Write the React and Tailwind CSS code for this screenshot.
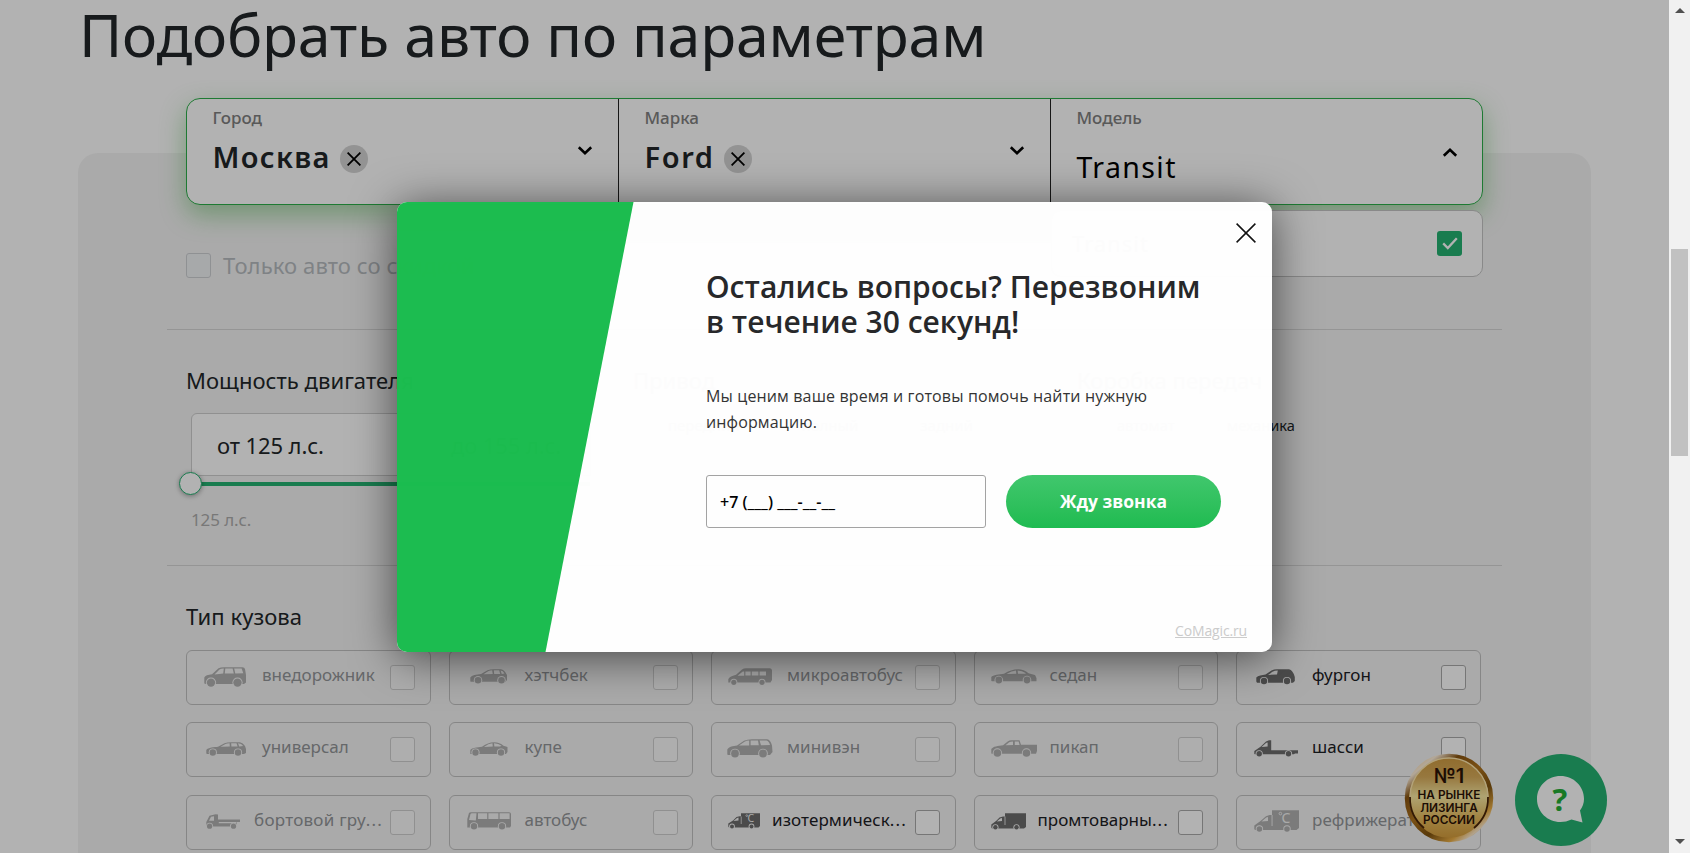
import { clsx } from "clsx";

const WINDOW = "fill-[#f4f4f4]";

function Wheels({ a, b, y, r }) {
  return (
    <>
      <circle cx={a} cy={y} r={r + 0.9} className={WINDOW} />
      <circle cx={b} cy={y} r={r + 0.9} className={WINDOW} />
      <circle cx={a} cy={y} r={r} />
      <circle cx={b} cy={y} r={r} />
    </>
  );
}

const icons = {
  suv: {
    w: 42, h: 20,
    body: (
      <>
        <path d="M.3 16.5V10.5C1 8.5 4 7.6 8 7.2L14.5 1.2Q16.5.2 20 .2H38.5Q40.5.3 41 2L42 8V15.5L40 17H2Z" />
        <path className={WINDOW} d="M10.5 7.4L15.5 2.5Q17 1.5 19.8 1.4L19.2 6.6ZM21.3 1.4H28.6L29.8 6.5H20.8ZM30.2 1.4H37.6L39.3 6.2 31.3 6.5Z" />
        <Wheels a={7} b={33.5} y={15.6} r={4.2} />
      </>
    ),
  },
  hatch: {
    w: 38, h: 15,
    body: (
      <>
        <path d="M.3 12.5V8.5C2 6.2 6 5.6 11 5L17.5 1.2Q20 .3 24 .3H31Q34 .6 37 6V11L35.5 12.8H1Z" />
        <path className={WINDOW} d="M13.5 5.2L18.5 2Q20 1.3 22.2 1.3L22.7 5ZM23.8 1.3H29.2L30.2 4.9H24.2ZM30.6 1.5Q33 1.7 34.5 4.6L31.8 4.9Z" />
        <Wheels a={8} b={31.5} y={11.2} r={3.3} />
      </>
    ),
  },
  wagon: {
    w: 40, h: 14,
    body: (
      <>
        <path d="M.3 11.5V8C2 5.5 8 5.2 12 4.8L18.5 1.2Q21 .3 25 .3H34Q37 .8 39 4L40 7V11L38 12H1Z" />
        <path className={WINDOW} d="M14.5 4.7L19.5 2Q21 1.3 23.6 1.2L23.8 4.5ZM25.2 1.2H30.5L31.6 4.4H25.4ZM32 1.3Q35.5 1.4 37.2 4.1L33.2 4.4Z" />
        <Wheels a={6.8} b={32} y={10.5} r={3.2} />
      </>
    ),
  },
  coupe: {
    w: 38, h: 14,
    body: (
      <>
        <path d="M.3 12V8C2 5.8 7 5.4 12 4.8Q18 .3 24 .3 30 .5 33.5 3.8L37.5 5V10L36 12H1Z" />
        <path className={WINDOW} d="M14 5Q18.5 1.5 22.4 1.3L22.8 4.6ZM24 1.3Q28.5 1.3 31.5 3.8L30 4.4 24.4 4.6Z" />
        <Wheels a={5.5} b={31} y={10.5} r={3.2} />
      </>
    ),
  },
  flatbed: {
    w: 34, h: 15,
    body: (
      <>
        <path d="M.3 12.5V8L3.5 1.8 9.5.2 12 .5V5.5H34V8H31L30 12.5H1Z" />
        <path className={WINDOW} d="M3 6.8L5 2.8 8 2.2V6.8ZM12.8 8H30.5V9.2H12.8Z" />
        <Wheels a={3.6} b={27.5} y={12.2} r={2.6} />
      </>
    ),
  },
  bus: {
    w: 44, h: 18,
    body: (
      <>
        <path d="M.3 15.5V7L2 .9Q2.5.2 4 .2H42Q44 .4 44 2V14L43 15.5Z" />
        <path className={WINDOW} d="M2 8L3.5 2Q3.8 1.3 5 1.3H9.5L8.8 8.4ZM11 1.3H20.2V7H11ZM21.4 1.3H31.4V7H21.4ZM32.6 1.3H42.6V7H32.6Z" />
        <Wheels a={7} b={35} y={14.3} r={3.2} />
      </>
    ),
  },
  minibus: {
    w: 44, h: 18,
    body: (
      <>
        <path d="M.3 14.5V11C2 8.2 5 7.8 8 6.8L14 1.5Q15.5.2 18 .2H42Q44 .4 44 2.5V12L42.5 14.5Z" />
        <path className={WINDOW} d="M9.5 7.8L14.8 3.4H16.2V7.8ZM17.4 3.6H22.6V7.4H17.4ZM23.8 3.6H30.4V7.4H23.8ZM31.6 3.6H38V7.4H31.6Z" />
        <Wheels a={5.8} b={34} y={14.3} r={2.6} />
      </>
    ),
  },
  sedan: {
    w: 46, h: 15,
    body: (
      <>
        <path d="M.3 12V8C2 5.8 8 5.6 13 4.8Q20 .3 27 .3 33 .5 37.5 4.3L44 6 45.5 9V12.2H1Z" />
        <path className={WINDOW} d="M15.5 5Q20.5 1.6 25 1.4L25.3 4.8ZM26.6 1.4Q31 1.4 35 4.2L34 4.7 27 4.8Z" />
        <Wheels a={7.8} b={36} y={11} r={3.4} />
      </>
    ),
  },
  minivan: {
    w: 46, h: 19,
    body: (
      <>
        <path d="M.3 15.5V10.5C2 7.5 6 7 10 6.5L17 1.8Q20 .3 25 .3H40Q43.5.8 45 6.5L45.5 13 43 16H1Z" />
        <path className={WINDOW} d="M12 6.6L17.5 2.8Q19.5 1.6 22.2 1.5V6.4ZM23.6 1.5H31L31.8 6.2H23.6ZM32.6 1.5H39.5Q42 2.2 43 6L34 6.2Z" />
        <Wheels a={8} b={36} y={14.5} r={3.9} />
      </>
    ),
  },
  pickup: {
    w: 46, h: 18,
    body: (
      <>
        <path d="M.3 13.5V9C2 6.4 7 5.8 12 5.2L17 1.2Q18.5.3 20 .3H28.5L30 4.8H46V11L45 13.8H1Z" />
        <path className={WINDOW} d="M14.5 5.2L18.2 2.2Q19.5 1.4 22 1.4V5ZM23.8 1.4H27.6L28.6 5H23.8Z" />
        <Wheels a={6.4} b={35.5} y={13} r={3.8} />
      </>
    ),
  },
  van: {
    w: 39, h: 16,
    body: (
      <>
        <path d="M.3 12.5V8.5C2 6.6 6 6.2 9.5 5.6L15.5 1.5Q18 .3 21 .3H33Q37 1.2 38.8 8V12L37 13.8H1Z" />
        <path className={WINDOW} d="M12 5.9L16.5 2.8Q18.5 1.7 21.8 1.6L21 5.6Z" />
        <Wheels a={8} b={31} y={12} r={3.2} />
      </>
    ),
  },
  chassis: {
    w: 44, h: 17,
    body: (
      <>
        <path d="M.3 14V11L6.5 6.8 12 1.5 15 .3H17.2V10.2H44V13.5H41L40 14.2H1Z" />
        <path className={WINDOW} d="M7.5 7L12.3 2.8 13.6 2.4V6.4Z" />
        <Wheels a={5.2} b={34.5} y={13.8} r={2.7} />
      </>
    ),
  },
  reefer: {
    w: 45, h: 23,
    body: (
      <>
        <path d="M.3 19V15.5L6.5 11 12 6.2 15.5 5H18V.2H45V18L42.5 20H1Z" />
        <path className={WINDOW} d="M7.5 11.4L12.3 7.6 14 7V11ZM17.6 5H18.5V16H17.6Z" />
        <circle cx="26.4" cy="3.6" r="1.3" fill="none" strokeWidth="0.9" className="stroke-[#f4f4f4]" />
        <text x="27.6" y="13.4" className="fill-[#f4f4f4] font-['Noto_Sans'] text-[14px]">C</text>
        <Wheels a={5.4} b={33} y={19} r={2.8} />
      </>
    ),
  },
  isotherm: {
    w: 32, h: 16,
    body: (
      <>
        <path d="M.3 13.5V10.5L5 7.5 8.5 4 11.5 3.2H13V.2H32V13L30.5 14.5H1Z" />
        <path className={WINDOW} d="M5.5 8L9 5 10.5 4.6V7.6ZM12.8 3.4H13.5V11H12.8Z" />
        <circle cx="18.8" cy="2.6" r="0.9" fill="none" strokeWidth="0.7" className="stroke-[#f4f4f4]" />
        <text x="19.6" y="9.3" className="fill-[#f4f4f4] font-['Noto_Sans'] text-[10.5px]">C</text>
        <Wheels a={4} b={23.5} y={13.4} r={2} />
      </>
    ),
  },
  boxTruck: {
    w: 35, h: 17,
    body: (
      <>
        <path d="M.3 14.5V11.5L5 8 8.5 4.5 12 3.4H14V.2H35V14L33 15.5H1Z" />
        <path className={WINDOW} d="M5.8 8.4L9.2 5.4 11 5V8ZM13.6 3.6H14.4V12H13.6Z" />
        <Wheels a={4.4} b={25.5} y={14.3} r={2.2} />
      </>
    ),
  },
};

const bodies = [
  ["suv", "внедорожник", false, "pl-[17px]", "left-[75px]"],
  ["hatch", "хэтчбек", false, "pl-[20px]", "left-[75px]"],
  ["minibus", "микроавтобус", false, "pl-[16px]", "left-[75px]"],
  ["sedan", "седан", false, "pl-[16px]", "left-[75px]"],
  ["van", "фургон", true, "pl-[19px]", "left-[75px]"],
  ["wagon", "универсал", false, "pl-[19px]", "left-[75px]"],
  ["coupe", "купе", false, "pl-[20px]", "left-[75px]"],
  ["minivan", "минивэн", false, "pl-[15px]", "left-[75px]"],
  ["pickup", "пикап", false, "pl-[16px]", "left-[75px]"],
  ["chassis", "шасси", true, "pl-[17px]", "left-[75px]"],
  ["flatbed", "бортовой гру", false, "pl-[19px]", "left-[67px]", "tracking-[0.25px]"],
  ["bus", "автобус", false, "pl-[17px]", "left-[75px]"],
  ["isotherm", "изотермическ", true, "pl-[16px]", "left-[60px]", "tracking-[0.1px]"],
  ["boxTruck", "промтоварны", true, "pl-[16px]", "left-[63px]", "tracking-normal"],
  ["reefer", "рефрижератор", false, "pl-[17px]", "left-[75px]"],
];

function BodyCard({ item: [icon, label, active, pad, left, cut] }) {
  const { w, h, body } = icons[icon];
  return (
    <div className="relative flex h-[55px] items-center justify-between rounded-md border border-[#c0c0c0] pr-[14.5px]">
      <div className={clsx("flex items-center", pad, active ? "text-[#6c6c6c]" : "text-[#b1b1b1]")}>
        <svg width={w} height={h} viewBox={`0 0 ${w} ${h}`} fill="currentColor" className="-mt-0.5">
          {body}
        </svg>
      </div>
      <span
        className={clsx(
          "absolute top-[12px] text-[17px] leading-6 whitespace-nowrap",
          left,
          cut,
          active ? "text-[#1c2024]" : "text-[#929598]",
        )}
      >
        {label}
        {cut && <span className="tracking-[1.1px]">...</span>}
      </span>
      <span
        className={clsx(
          "size-[25px] rounded-[3px] border",
          active ? "border-[#aaaaaa] bg-white" : "border-[#cfcfcf] bg-[#f9f9f9]",
        )}
      />
    </div>
  );
}

function Chevron({ up }) {
  return (
    <svg width="16" height="10" viewBox="0 0 16 10" fill="none" stroke="#000" strokeWidth="2.6" className={clsx(up && "rotate-180")}>
      <path d="M1.8 1.3L8 7.3L14.2 1.3" />
    </svg>
  );
}

function Clear() {
  return (
    <span className="mt-[3px] flex size-[28px] items-center justify-center rounded-full bg-[#d3d3d3]">
      <svg width="14" height="14" viewBox="0 0 14 14" stroke="#000" strokeWidth="1.8">
        <path d="M.6.6L13.4 13.4M13.4.6L.6 13.4" />
      </svg>
    </span>
  );
}

function Field({ label, value, tracking }) {
  return (
    <div className="flex w-[432px] justify-between border-r border-[#222] pr-[25px] pl-[25.5px]">
      <div className="pt-[7px]">
        <div className="text-[17px] leading-6 font-medium text-[#808080]">{label}</div>
        <div className="mt-[9px] flex items-center gap-[9px] leading-[36px]">
          <span className={clsx("text-[29px] font-semibold text-[#212629]", tracking)}>{value}</span>
          <Clear />
        </div>
      </div>
      <div className="pt-[47px]">
        <Chevron />
      </div>
    </div>
  );
}

function Selector() {
  return (
    <div className="relative -mt-[55px] ml-[108px] flex h-[107px] w-[1297px] shrink-0 rounded-[14px] border border-[#2caf4a] bg-white shadow-[0_10px_26px_rgba(50,170,50,0.42)]">
      <Field label="Город" value="Москва" tracking="tracking-[1.3px]" />
      <Field label="Марка" value="Ford" tracking="tracking-[1.6px]" />
      <div className="flex flex-1 justify-between pr-[24px] pl-[25.5px]">
        <div className="pt-[7px]">
          <div className="text-[17px] leading-6 font-medium text-[#808080]">Модель</div>
          <div className="mt-[18px] text-[28.5px] leading-[38px] tracking-[1.4px] text-black">Transit</div>
        </div>
        <div className="pt-[48px]">
          <Chevron up />
        </div>
      </div>
      <div className="absolute top-[111px] left-[864px] flex h-[67px] w-[432px] items-center justify-between rounded-[10px] border border-[#c4c4c4] bg-white pr-[20px] pl-[20px]">
        <span className="text-[22px] tracking-[1px] text-black">Transit</span>
        <span className="flex size-[25px] items-center justify-center rounded-[3px] bg-[#25b272]">
          <svg width="16" height="13" viewBox="0 0 16 13" fill="none" stroke="#fff" strokeWidth="2.3">
            <path d="M1.2 6.4L5.8 11L14.8 1.2" />
          </svg>
        </span>
      </div>
    </div>
  );
}

const heading = "text-[22px] leading-[30px] tracking-[0.05px] text-[#212629]";

function Specs() {
  return (
    <div className="ml-[108px] flex h-[235px] pt-[35px]">
      <div className="w-[447px]">
        <div className={heading}>Мощность двигателя</div>
        <div className="mt-[18px] ml-[5px] flex h-[63px] w-[400px] rounded-t-md border border-[#cfcfcf] bg-white pt-[17px] pl-[25px] text-[22px] leading-7 tracking-[-0.1px] text-[#212629]">
          <span className="w-[234px]">от 125 л.с.</span>
          <span>до 155 л.с.</span>
        </div>
        <div className="-mt-[4px] -ml-[7px] flex items-center">
          <span className="relative size-[23px] rounded-full border border-[#25b272] bg-white shadow-[0_1px_5px_rgba(0,0,0,0.35)]" />
          <span className="-ml-2 h-1 w-[396px] bg-[#25b272]" />
        </div>
        <div className="mt-[13px] ml-[5px] text-[17px] leading-6 tracking-[-0.1px] text-[#acacac]">125 л.с.</div>
      </div>
      <div className="w-[444px]">
        <div className={heading}>Привод</div>
        <div className="mt-[18px] ml-[35px] flex gap-[62px] text-[15px] leading-6 text-[#212629]">
          <span>передний</span>
          <span>полный</span>
          <span>задний</span>
        </div>
      </div>
      <div>
        <div className={heading}>Коробка передач</div>
        <div className="mt-[18px] ml-[40px] flex gap-[52.5px] text-[14.6px] leading-6 text-[#212629]">
          <span>автомат</span>
          <span>механика</span>
        </div>
      </div>
    </div>
  );
}

function Badge() {
  return (
    <div className="absolute top-[753px] left-[1404px] flex size-[90px] flex-col items-center pt-[13px] text-[#2b1206]">
      <svg viewBox="0 0 90 90" className="absolute inset-0 size-full">
        <defs>
          <linearGradient id="rim" x1="0.1" y1="0" x2="0.9" y2="1">
            <stop offset="0" stopColor="#ffd28a" />
            <stop offset="0.12" stopColor="#fff0dc" />
            <stop offset="0.25" stopColor="#8a5510" />
            <stop offset="0.45" stopColor="#b0741f" />
            <stop offset="0.65" stopColor="#80530f" />
            <stop offset="0.82" stopColor="#e9ad45" />
            <stop offset="0.9" stopColor="#ffe9c8" />
            <stop offset="1" stopColor="#b57a25" />
          </linearGradient>
          <linearGradient id="disc" x1="0" y1="0" x2="0" y2="1">
            <stop offset="0" stopColor="#cf9a40" />
            <stop offset="0.25" stopColor="#d8ac5a" />
            <stop offset="0.48" stopColor="#faeaa4" />
            <stop offset="0.75" stopColor="#e6ba5c" />
            <stop offset="1" stopColor="#d39a3a" />
          </linearGradient>
        </defs>
        <circle cx="45" cy="45" r="42" fill="url(#disc)" stroke="url(#rim)" strokeWidth="4.5" />
        <path d="M6 44a39 39 0 0 0 14 31M84 44a39 39 0 0 1-14 31" fill="none" stroke="#4a2508" strokeWidth="1.8" />
        <path d="M6 44a39 39 0 0 1 78 0" fill="none" stroke="#ffe9b0" strokeWidth="1.3" />
      </svg>
      <div className="relative font-['Inter'] text-[20px] leading-[20px] font-semibold">№1</div>
      <div className="relative mt-[3px] text-center font-['Inter'] text-[11.8px] leading-[12.7px] font-semibold">
        НА РЫНКЕ
        <br />
        ЛИЗИНГА
        <br />
        РОССИИ
      </div>
    </div>
  );
}

function ChatButton() {
  return (
    <div className="absolute top-[754px] left-[1515px] flex size-[92px] items-center justify-center rounded-full bg-[#25b272]">
      <svg viewBox="0 0 92 92" className="absolute inset-0 size-full">
        <path
          fill="#fff"
          d="M45.5 22C58.5 22 69 32 69 45Q69 51 65 56.5L67.5 68.5L56.5 65.5Q51 68 45.5 68C32.5 68 22 58 22 45S32.5 22 45.5 22Z"
        />
      </svg>
      <span className="relative -mt-[3px] -ml-[2px] font-['Open_Sans'] text-[31px] leading-8 font-bold text-[#25ae36]">?</span>
    </div>
  );
}

function Modal() {
  return (
    <div className="absolute top-[202px] left-[397px] h-[450px] w-[875px] overflow-hidden rounded-[10px] bg-white pl-[309px] font-['Open_Sans'] opacity-[0.99]">
      <svg width="240" height="450" viewBox="0 0 240 450" className="absolute top-0 left-0">
        <path d="M0 0H236.5L148.5 450H0Z" fill="#1bbd4f" />
      </svg>
      <svg width="20" height="20" viewBox="0 0 20 20" stroke="#111" strokeWidth="1.5" className="absolute top-[20.5px] right-[16.5px]">
        <path d="M.6.6L19.4 19.4M19.4.6L.6 19.4" />
      </svg>
      <h2 className="pt-[67px] text-[30px] leading-[35px] font-semibold text-[#262729]">
        Остались вопросы? Перезвоним
        <br />в течение 30 секунд!
      </h2>
      <p className="mt-[44px] text-[16px] leading-[26px] tracking-[0.14px] text-[#333]">
        Мы ценим ваше время и готовы помочь найти нужную
        <br />
        информацию.
      </p>
      <div className="mt-[40px] flex gap-[20px]">
        <div className="flex h-[53px] w-[280px] items-center rounded-[3px] border border-[#a3a3a3] pl-[13px] text-[16px] font-semibold text-black">
          +7 (___) ___-__-__
        </div>
        <div className="flex h-[53px] w-[215px] items-center justify-center rounded-full bg-linear-to-b from-[#3fc86d] to-[#1dbc50] text-[17.5px] font-bold text-white">
          Жду звонка
        </div>
      </div>
      <div className="absolute right-[25px] bottom-[11px] text-[14px] leading-5 tracking-[-0.15px] text-[#ccc] underline">
        CoMagic.ru
      </div>
    </div>
  );
}

function Scrollbar() {
  return (
    <div className="flex w-[21px] flex-col items-center bg-[#f1f1f1]">
      <div className="flex h-[249px] items-start pt-[8px]">
        <svg width="10" height="5" viewBox="0 0 10 5" fill="#505050"><path d="M0 5L5 0L10 5Z" /></svg>
      </div>
      <div className="h-[207px] w-[17px] bg-[#c1c1c1]" />
      <div className="flex flex-1 items-end pb-[9px]">
        <svg width="10" height="5" viewBox="0 0 10 5" fill="#505050"><path d="M0 0L5 5L10 0Z" /></svg>
      </div>
    </div>
  );
}

export default function App() {
  return (
    <div className="relative flex h-[853px] w-[1690px] overflow-hidden bg-white font-['Noto_Sans',sans-serif]">
      <main className="flex w-[1669px] flex-col overflow-hidden">
        <h1 className="h-[98px] shrink-0 pl-[79px] text-[59px] leading-[69px] tracking-[-0.15px] text-[#212629]">
          Подобрать авто по параметрам
        </h1>
        <section className="mx-[78px] mt-[55px] flex h-[700px] shrink-0 flex-col rounded-t-[20px] bg-[#f4f4f4]">
          <Selector />
          <div className="mt-[48px] ml-[108px] flex h-[25px] items-center gap-[12px]">
            <span className="size-[25px] rounded-[3px] border border-[#cdd0d3] bg-[#f0f2f4]" />
            <span className="-mt-[2px] text-[22px] leading-[30px] tracking-[0.1px] text-[#b6bbbf]">Только авто со скидкой</span>
          </div>
          <div className="mt-[51px] ml-[89px] h-px w-[1335px] shrink-0 bg-[#d6d6d6]" />
          <Specs />
          <div className="ml-[89px] h-px w-[1335px] shrink-0 bg-[#d6d6d6]" />
          <div className="ml-[108px] pt-[35px]">
            <div className={heading}>Тип кузова</div>
          </div>
          <div className="mt-[19px] ml-[108px] grid w-[1295px] grid-cols-5 gap-x-[17.6px] gap-y-[17.3px]">
            {bodies.map((item) => (
              <BodyCard key={item[0]} item={item} />
            ))}
          </div>
        </section>
      </main>
      <Scrollbar />
      <Badge />
      <ChatButton />
      <div className="absolute inset-y-0 left-0 w-[1669px] bg-black/30" />
      <div className="absolute top-[202px] left-[397px] h-[450px] w-[875px] rounded-[10px] shadow-[0_5px_45px_rgba(0,0,0,0.6)]" />
      <Modal />
    </div>
  );
}
